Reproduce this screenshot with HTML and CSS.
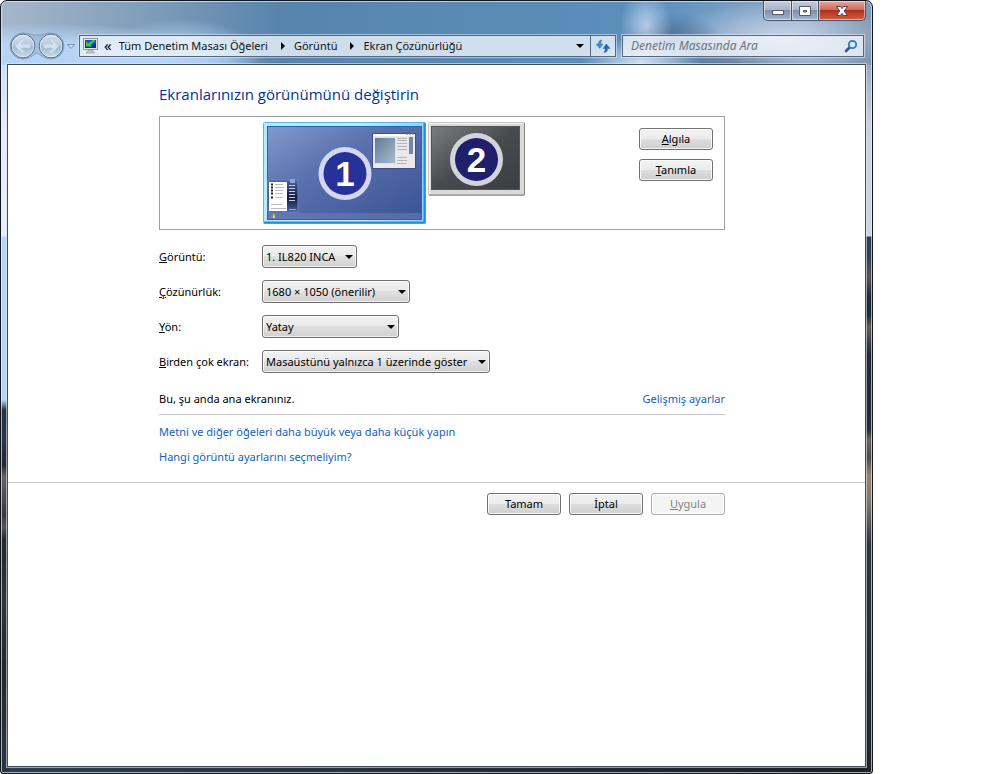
FILE: index.html
```html
<!DOCTYPE html>
<html lang="tr">
<head>
<meta charset="utf-8">
<title>Ekran Çözünürlüğü</title>
<link rel="stylesheet" href="styles.css">
</head>
<body>
<div class="window">
  <header class="glass">
    <div class="caption">
      <button class="cap" type="button" aria-label="Simge durumuna küçült">
        <svg width="14" height="14" viewBox="0 0 14 14"><rect x="1.5" y="6.500" width="11" height="4" fill="#fff" stroke="#555b6b"/></svg>
      </button>
      <button class="cap cap-max" type="button" aria-label="Ekranı kapla">
        <svg width="14" height="14" viewBox="0 0 14 14"><path d="M1.500 2.500h11v9h-11z M5.500 6.500v1.500h3V6.500z" fill="#fff" fill-rule="evenodd" stroke="#555b6b"/></svg>
      </button>
      <button class="cap cap-close" type="button" aria-label="Kapat">
        <svg width="14" height="14" viewBox="0 0 14 14"><path d="M1.500 2.500h4L7 4.600l1.500-2.100h4L9.200 7l3.300 4.500h-4L7 9.400l-1.500 2.100h-4L4.800 7z" fill="#fff" stroke="#59404a"/></svg>
      </button>
    </div>
    <div class="navrow">
      <div class="nav">
        <svg width="68" height="28" viewBox="0 0 68 28">
          <defs>
            <linearGradient id="ball" x1="0" y1="0" x2="0" y2="1"><stop offset="0" stop-color="#d3e0ec"/><stop offset=".48" stop-color="#b5c9dc"/><stop offset=".52" stop-color="#9db7cf"/><stop offset="1" stop-color="#c8dcef"/></linearGradient>
          </defs>
          <path d="M14 1c6 0 7 2 14 2s8-2 14-2a13 13 0 0 1 0 26c-6 0-9-3-14-6-5 3-8 6-14 6a13 13 0 0 1 0-26z" fill="#8ba6c3" fill-opacity=".45" stroke="#56708c" stroke-opacity=".4"/>
          <circle cx="14" cy="14" r="11.800" fill="url(#ball)" stroke="#566c84"/>
          <circle cx="14" cy="14" r="10.800" fill="none" stroke="#eef5fb" stroke-opacity=".7"/>
          <circle cx="42" cy="14" r="11.800" fill="url(#ball)" stroke="#566c84"/>
          <circle cx="42" cy="14" r="10.800" fill="none" stroke="#eef5fb" stroke-opacity=".7"/>
          <path d="M6 14l7-7h3.500l-4.500 5h9.500v4H12l4.500 5H13z" fill="#d3e1ee" stroke="#b3c7d9" stroke-width=".6"/>
          <path d="M50 14l-7-7h-3.500l4.500 5h-9.500v4H44l-4.500 5H43z" fill="#d3e1ee" stroke="#b3c7d9" stroke-width=".6"/>
          <path d="M58.500 12.500h7L62 16.500z" fill="#cfe2f6" stroke="#7591b0"/>
        </svg>
      </div>
      <nav class="address" aria-label="Adres">
        <svg width="16" height="16" viewBox="0 0 16 16">
          <rect x=".5" y=".5" width="14" height="11" fill="#e4e4dc" stroke="#9a9a92"/>
          <rect x="2" y="2" width="11" height="8" fill="#1226b8"/>
          <path d="M2 2h11v3L8 8 2 5z" fill="#1d48d8"/>
          <path d="M12.500 2.500L7.500 7l2 1.500H3V3.500L5 5.500l5-3.500z" fill="#35d03a"/>
          <path d="M5 12h5v1.500l2 1.500H3l2-1.500z" fill="#c8c8c0" stroke="#8a8a84" stroke-width=".5"/>
        </svg>
        <span class="chev">«</span>
        <a href="#">Tüm Denetim Masası Öğeleri</a>
        <span class="sep"></span>
        <a href="#">Görüntü</a>
        <span class="sep"></span>
        <a href="#">Ekran Çözünürlüğü</a>
        <button class="drop" type="button" aria-label="Önceki konumlar"><span class="tri"></span></button>
        <button class="refresh" type="button" aria-label="Yenile">
          <svg width="16" height="14" viewBox="0 0 16 14">
            <path d="M7 1C4.200 1.200 3.500 2.500 3.500 5H1l3.700 4.500L8 5H5.800c0-1.800.2-2.800 1.200-4z" fill="#3d8ad0" stroke="#2867ae" stroke-width=".4"/>
            <path d="M9 13.500c2.800-.2 3.500-1.500 3.500-4H15L11.300 5 8 9.500h2.200c0 1.800-.2 2.800-1.200 4z" fill="#2f63bd" stroke="#234f9f" stroke-width=".4"/>
          </svg>
        </button>
      </nav>
      <label class="search">
        <input type="text" placeholder="Denetim Masasında Ara" aria-label="Denetim Masasında Ara">
        <svg width="14" height="14" viewBox="0 0 14 14"><path d="M2 12L6 8" stroke="#3a4fa0" stroke-width="2.600" stroke-linecap="round"/><circle cx="8.500" cy="5.500" r="3.700" fill="#d9ecfb" stroke="#2f78c4" stroke-width="1.800"/></svg>
      </label>
    </div>
  </header>

  <main class="page">
    <div class="content">
      <h1>Ekranlarınızın görünümünü değiştirin</h1>
      <section class="panel">
        <div class="monitors">
          <svg width="163" height="102" viewBox="0 0 163 102" font-family="Liberation Sans, sans-serif" font-weight="bold">
            <defs>
              <linearGradient id="desk" x1="0" y1="0" x2="1" y2="1"><stop offset="0" stop-color="#8498cb"/><stop offset=".4" stop-color="#5a71ae"/><stop offset="1" stop-color="#3a5395"/></linearGradient>
              <linearGradient id="frame" x1="0" y1="0" x2="1" y2="0"><stop offset="0" stop-color="#b5ecff"/><stop offset=".6" stop-color="#c6e8fd"/><stop offset="1" stop-color="#8fd0fa"/></linearGradient>
              <linearGradient id="shot" x1="0" y1="0" x2="1" y2="1"><stop offset="0" stop-color="#5c7b96"/><stop offset="1" stop-color="#a9bccd"/></linearGradient>
              <linearGradient id="menu" x1="0" y1="0" x2="0" y2="1"><stop offset="0" stop-color="#4c64a2"/><stop offset=".55" stop-color="#131c3c"/><stop offset="1" stop-color="#4660a4"/></linearGradient>
            </defs>
            <rect x=".5" y=".5" width="162" height="101" rx="1" fill="url(#frame)" stroke="#5bb6ee"/>
            <path d="M1 100.500h160.500V1" fill="none" stroke="#1c8ee2" stroke-width="2"/>
            <rect x="4.500" y="4.500" width="154" height="93" fill="url(#desk)" stroke="#1f66b4"/>
            <rect x="5" y="91" width="153" height="6" fill="#6d83bd" fill-opacity=".5"/>
            <rect x="8" y="92" width="2" height="2" fill="#e3663a"/><rect x="10" y="92" width="2" height="2" fill="#8fce4c"/><rect x="8" y="94" width="2" height="2" fill="#47a0e8"/><rect x="10" y="94" width="2" height="2" fill="#f2d34a"/>
            <circle cx="82" cy="51.500" r="26.500" fill="#d4d7ee"/><circle cx="82" cy="51.500" r="21.500" fill="#26319a"/>
            <text x="82" y="63.500" font-size="35" text-anchor="middle" fill="#fff">1</text>
            <rect x="109.500" y="11.500" width="43" height="35" fill="#e9e9ed" stroke="#3c5189"/>
            <path d="M110 12h42v2h-42z" fill="#fff"/><path d="M143 12h2m1 0h2m1 0h2" stroke="#66708e"/>
            <rect x="111.500" y="15.500" width="21" height="26" fill="url(#shot)" stroke="#dfe3e9"/>
            <path d="M134 16.500h10m-10 2h10m-10 3h10m-10 3h10m-10 3h10m-10 8h10m-10 3h10m-10 3h9" stroke="#b1b3b8"/>
            <rect x="146" y="15" width="4" height="17" fill="#7189a6"/>
            <rect x="5" y="58" width="30" height="32" fill="url(#menu)" stroke="#7084b9"/>
            <rect x="6" y="60" width="18" height="29" fill="#fff"/>
            <path d="M8 62.500h2m-2 3h2m-2 3h2m-2 3h2m-2 4h2" stroke="#222" stroke-width="2"/><path d="M12 62.500h8m-8 3h9m-9 3h8m-8 3h8m-8 4h8m-12 7h11m-11 4h15" stroke="#bbb"/>
            <path d="M26 63.500h6m-6 3h6m-6 3h6m-6 3h6m-6 3h6m-6 3h6" stroke="#c6cde2"/><rect x="27" y="57" width="5" height="4" fill="#91a3cf"/><path d="M26 87.500h7" stroke="#9fb0da"/>
          </svg>
          <svg width="97" height="74" viewBox="0 0 97 74" font-family="Liberation Sans, sans-serif" font-weight="bold">
            <defs>
              <linearGradient id="dark" x1="0" y1="0" x2="1" y2="1"><stop offset="0" stop-color="#7b7e80"/><stop offset=".5" stop-color="#484b4e"/><stop offset="1" stop-color="#3b3e41"/></linearGradient>
            </defs>
            <rect x=".5" y=".5" width="96" height="73" rx="1" fill="#d9d9d9" stroke="#c4c4c4"/>
            <path d="M1 73h95.500V1" fill="none" stroke="#868686"/><path d="M1.500 72V1.500H95" fill="none" stroke="#f4f4f4"/>
            <rect x="3.500" y="4.500" width="88" height="63" fill="url(#dark)" stroke="#555"/>
            <circle cx="48.500" cy="37.500" r="26.500" fill="#d3d3dd"/><circle cx="48.500" cy="37.500" r="21.500" fill="#1f1f6b"/>
            <text x="48.500" y="49.500" font-size="35" text-anchor="middle" fill="#fff">2</text>
          </svg>
        </div>
        <div class="side">
          <button class="btn" type="button"><u>A</u>lgıla</button>
          <button class="btn" type="button"><u>T</u>anımla</button>
        </div>
      </section>

      <form class="fields">
        <label for="display"><u>G</u>örüntü:</label>
        <span class="combo w-display"><select id="display"><option>1. IL820 INCA</option></select></span>
        <label for="resolution"><u>Ç</u>özünürlük:</label>
        <span class="combo w-resolution"><select id="resolution"><option>1680 × 1050 (önerilir)</option></select></span>
        <label for="orientation"><u>Y</u>ön:</label>
        <span class="combo w-orientation"><select id="orientation"><option>Yatay</option></select></span>
        <label for="multi"><u>B</u>irden çok ekran:</label>
        <span class="combo w-multi"><select id="multi"><option>Masaüstünü yalnızca 1 üzerinde göster</option></select></span>
      </form>

      <div class="status">
        <span>Bu, şu anda ana ekranınız.</span>
        <a href="#">Gelişmiş ayarlar</a>
      </div>
      <div class="links">
        <a href="#">Metni ve diğer öğeleri daha büyük veya daha küçük yapın</a>
        <a href="#">Hangi görüntü ayarlarını seçmeliyim?</a>
      </div>
    </div>
    <footer class="footer">
      <div class="actions">
        <button class="btn" type="button">Tamam</button>
        <button class="btn" type="button">İptal</button>
        <button class="btn" type="button" disabled><u>U</u>ygula</button>
      </div>
    </footer>
  </main>
</div>
</body>
</html>
```
FILE: styles.css
```css
* { box-sizing: border-box; }

body {
  margin: 0;
  background: #fff;
  color: #000;
  font: 11px/16px "Noto Sans", "Open Sans", sans-serif;
}

button, input, select { font: inherit; color: inherit; }
a { color: #0f62bd; text-decoration: none; }
svg { display: block; flex: none; }

.window {
  display: flex;
  flex-direction: column;
  min-height: 100vh;
  margin-right: 135px;
  padding: 0 6px 6px;
  border: 1px solid #10141c;
  border-radius: 7px 7px 3px 3px;
  box-shadow: inset 0 0 0 1px rgba(235, 245, 255, 0.65);
  background:
    radial-gradient(ellipse 26px 34px at 645px 24px, rgba(196, 216, 240, 0.85), transparent) no-repeat 0 0 / 100% 64px,
    radial-gradient(ellipse 60px 24px at 640px 62px, rgba(225, 233, 244, 0.9), transparent) no-repeat 0 0 / 100% 64px,
    radial-gradient(ellipse 50px 22px at 670px 34px, rgba(70, 96, 132, 0.65), transparent) no-repeat 0 0 / 100% 64px,
    radial-gradient(ellipse 110px 36px at 780px 36px, rgba(205, 216, 234, 0.9), transparent) no-repeat 0 0 / 100% 64px,
    radial-gradient(ellipse 80px 20px at 730px 60px, rgba(70, 88, 118, 0.6), transparent) no-repeat 0 0 / 100% 64px,
    radial-gradient(ellipse 240px 42px at 30px 64px, rgba(184, 214, 248, 0.95) 55%, transparent) no-repeat 0 0 / 100% 64px,
    radial-gradient(ellipse 80px 36px at 180px 54px, rgba(170, 204, 240, 0.8) 40%, transparent) no-repeat 0 0 / 100% 64px,
    linear-gradient(90deg, #a6b6c9, #7c9bb8 18%, #5784ad 32%, #5c8fbd 75%, #8fa9c8 92%, #8296af) no-repeat 0 0 / 100% 64px,
    linear-gradient(#cfe0f5, #e4ecfa 60px, #e8effa 171px, #b4d4f8 172px, #b4d4f8 335px, #27323f 345px, #27384b 375px, #23272f 400px, #6a6260 412px, #39373b 450px, #5b5556 462px, #24252b 475px, #34343e 540px, #26262c 600px, #2d3f52) no-repeat 0 64px / 8px 100%,
    linear-gradient(#9caabd, #c9d0da 60px, #ccd4de 171px, #2d4055 172px, #334155 192px, #5b5253 212px, #1c2936 232px, #1d2936 250px, #66595a 262px, #1f2a34 290px, #232d37 365px, #6f625d 375px, #4a4b52 393px, #94826f 410px, #837a70 435px, #2f3439 480px, #1b2023) no-repeat 100% 64px / 8px 100%,
    linear-gradient(90deg, #2d3f52, #1b2023);
}

.glass { flex: none; }

.caption {
  display: flex;
  justify-content: flex-end;
  height: 20px;
}

.cap {
  display: flex;
  align-items: center;
  justify-content: center;
  width: 29px;
  padding: 0;
  border: 1px solid #46536a;
  border-top: 0;
  border-radius: 0 0 0 5px;
  background: linear-gradient(#c5cddb, #aab5c9 45%, #8190aa 50%, #a5b4cc);
  box-shadow: inset 0 0 0 1px rgba(255, 255, 255, 0.5);
}
.cap-max { width: 28px; margin-left: -1px; border-radius: 0; }
.cap-close {
  width: 48px;
  margin-left: -1px;
  border-radius: 0 0 5px 0;
  background: linear-gradient(#e2a99e, #cf6a5b 45%, #b32f1b 50%, #cf5f43);
}

.navrow {
  display: flex;
  align-items: center;
  padding: 11px 2px 4px 2px;
}
.nav { width: 70px; }

.address {
  display: flex;
  flex: 1;
  align-items: center;
  height: 22px;
  padding-left: 3px;
  border: 1px solid #54677d;
  background: rgba(233, 241, 250, 0.82);
  box-shadow: 0 0 0 1px rgba(225, 238, 252, 0.55);
  white-space: nowrap;
}
.address a { color: #111; }
.chev { margin: 0 7px 2px 5px; font-size: 15px; }
.sep {
  margin: 0 9px 0 13px;
  border: 4px solid transparent;
  border-right: 0;
  border-left: 4px solid #000;
}
.drop {
  display: flex;
  align-items: center;
  justify-content: center;
  margin-left: auto;
  width: 20px;
  height: 20px;
  padding: 0;
  border: 0;
  background: none;
}
.tri {
  border: 4px solid transparent;
  border-top-color: #000;
  border-bottom: 0;
}
.refresh {
  display: flex;
  align-items: center;
  justify-content: center;
  width: 25px;
  height: 20px;
  padding: 0;
  border: 0;
  border-left: 1px solid #54677d;
  background: none;
}

.search {
  display: flex;
  align-items: center;
  width: 242px;
  height: 22px;
  margin-left: 6px;
  padding: 0 5px 0 8px;
  border: 1px solid #54677d;
  background: rgba(240, 244, 250, 0.82);
  box-shadow: 0 0 0 1px rgba(235, 242, 252, 0.55);
}
.search input {
  flex: 1;
  min-width: 0;
  padding: 0;
  border: 0;
  outline: 0;
  background: none;
  font-size: 12px;
  font-style: italic;
}
.search input::placeholder { color: #6e747c; opacity: 1; }

.page {
  flex: 1;
  border: 1px solid #3f4d5c;
  background: #fff;
  box-shadow: 0 0 0 1px rgba(225, 235, 245, 0.6);
}

.content {
  max-width: 717px;
  padding: 18px 0 0 151px;
}

h1 {
  margin: 0 0 11px;
  color: #003399;
  font-family: "Open Sans", "Noto Sans", sans-serif;
  font-size: 15px;
  font-weight: 400;
  line-height: 22px;
}

.panel {
  display: flex;
  justify-content: space-between;
  height: 114px;
  padding: 5px 11px 0 103px;
  border: 1px solid #a0a0a0;
}
.monitors { display: flex; gap: 2px; }
.side {
  display: flex;
  flex-direction: column;
  gap: 9px;
  padding-top: 6px;
}

.btn {
  width: 74px;
  height: 22px;
  padding: 0;
  border: 1px solid #707070;
  border-radius: 3px;
  background: linear-gradient(#f2f2f2, #ebebeb 50%, #dddddd 50%, #cfcfcf);
  box-shadow: inset 0 0 0 1px rgba(255, 255, 255, 0.8);
}
.btn:disabled {
  border-color: #adb2b5;
  background: #f4f4f4;
  color: #838383;
}

.fields {
  display: grid;
  grid-template-columns: 103px auto;
  row-gap: 12px;
  align-items: center;
  justify-items: start;
  margin: 15px 0 0;
}

.combo { position: relative; height: 23px; }
.combo::after {
  content: "";
  position: absolute;
  top: 10px;
  right: 4px;
  border: 4px solid transparent;
  border-top: 4px solid #000;
  border-bottom: 0;
  pointer-events: none;
}
.combo select {
  appearance: none;
  width: 100%;
  height: 23px;
  padding: 0 0 0 3px;
  border: 1px solid #707070;
  border-radius: 3px;
  background: linear-gradient(#f2f2f2, #e9e9e9 50%, #e0e0e0 50%, #d0d0d0);
  box-shadow: inset 0 0 0 1px rgba(255, 255, 255, 0.7);
}
.w-display { width: 95px; }
.w-resolution { width: 148px; }
.w-orientation { width: 137px; }
.w-multi { width: 228px; }

.status {
  display: flex;
  justify-content: space-between;
  margin-top: 18px;
  padding-bottom: 7px;
  border-bottom: 1px solid #c6c6c6;
}

.links {
  display: flex;
  flex-direction: column;
  align-items: flex-start;
  gap: 9px;
  padding: 9px 0 17px;
}

.footer {
  padding-top: 10px;
  border-top: 1px solid #c6c6c6;
}
.actions {
  display: flex;
  justify-content: flex-end;
  gap: 8px;
  max-width: 717px;
}
```
